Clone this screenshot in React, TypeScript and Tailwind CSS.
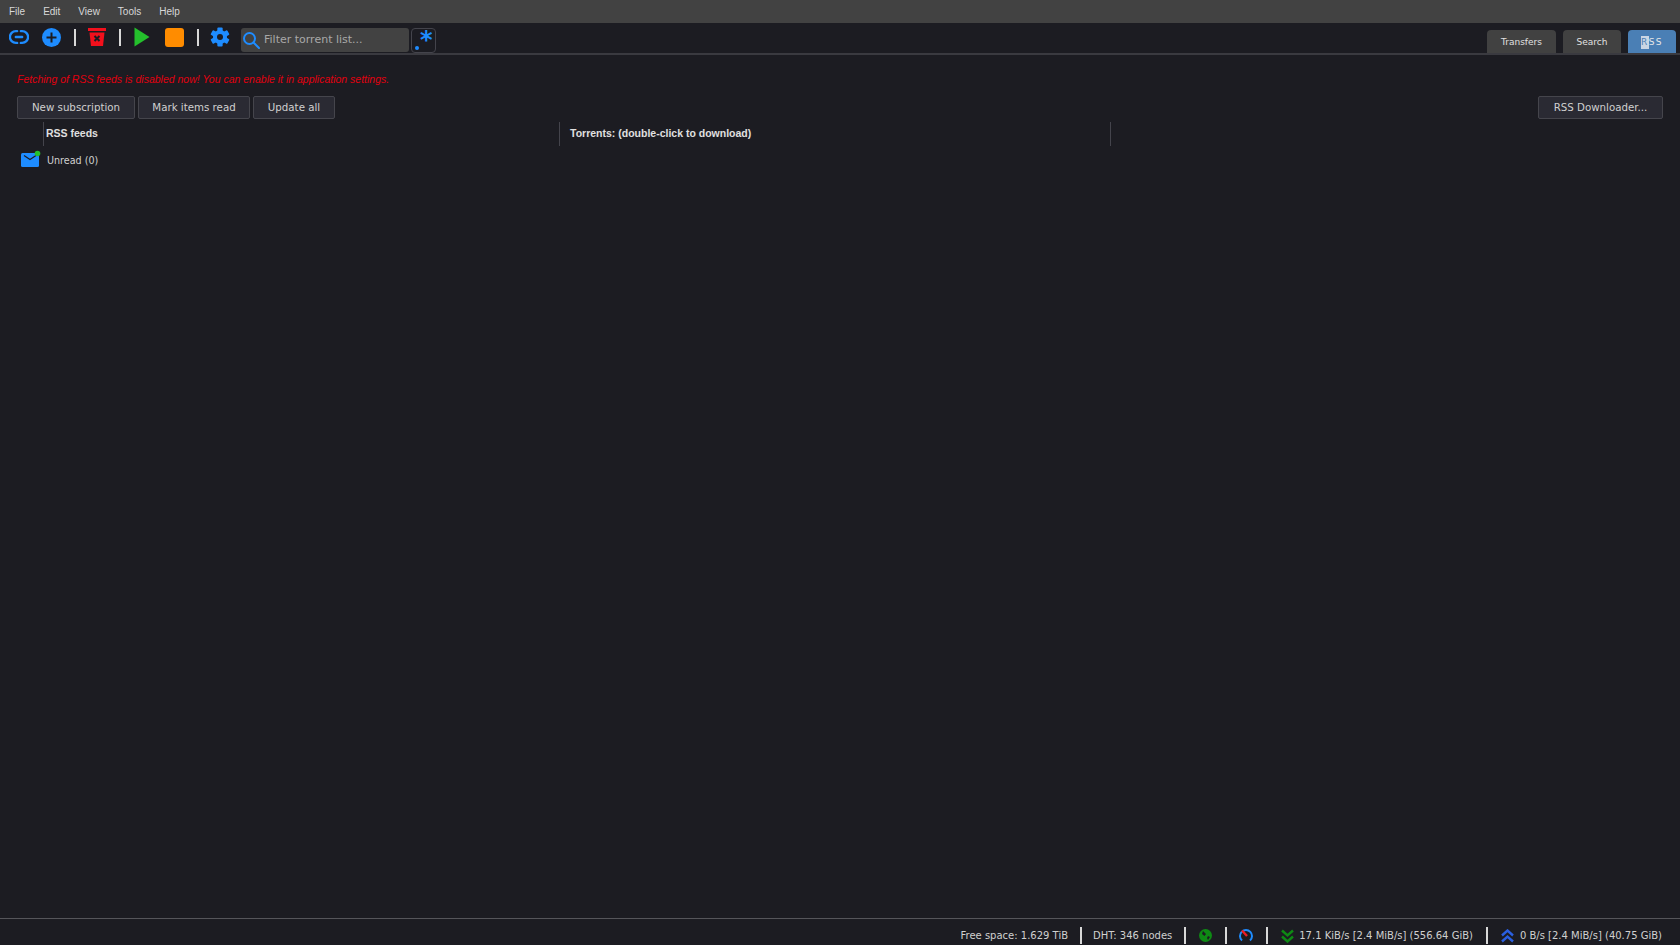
const dejavu = "font-['DejaVu_Sans',sans-serif]";

function Sep() {
  return <div className="w-[2px] h-[17px] bg-[#d8d8d8] shrink-0" />;
}

function Button({ label, width }: { label: string; width: string }) {
  return (
    <button className={`h-[23px] ${width} bg-[#2a2a33] border border-[#45454c] rounded-[2px] text-[10.25px] text-[#d0d0d0] text-center font-['DejaVu_Sans',sans-serif]`}>
      {label}
    </button>
  );
}

function Tab({ label, width, active }: { label: string; width: string; active?: boolean }) {
  return (
    <div
      className={`${width} h-[23px] pt-[2px] rounded-t-[4px] flex items-center justify-center text-[9px] font-['DejaVu_Sans',sans-serif] ${
        active ? "bg-[#4a7fb5] text-[#e8e8e8] tracking-[1.5px]" : "bg-[#414141] text-[#e0e0e0]"
      }`}
    >
      {active ? (
        <>
          <span className="bg-[#c9d6e4] text-[#4a7fb5]">R</span>SS
        </>
      ) : (
        label
      )}
    </div>
  );
}

export default function App() {
  const menu = ["File", "Edit", "View", "Tools", "Help"];

  return (
    <div className="h-screen w-full flex flex-col bg-[#1c1c22] text-[#d0d0d0] overflow-hidden font-['Liberation_Sans',sans-serif]">
      {/* menu */}
      <div className="h-[23px] shrink-0 bg-[#424242] flex items-center pl-[9px] gap-[18px] text-[10px] text-[#d8d8d8]">
        {menu.map((m) => (
          <span key={m}>{m}</span>
        ))}
      </div>

      {/* toolbar */}
      <div className="h-[32px] shrink-0 border-b-2 border-[#3a3a40] flex items-center relative">
        <div className="flex items-center pl-[9px] pb-[2px] h-full">
          <svg width="20" height="20" viewBox="-1 -1 22 22" fill="none" stroke="#1e8cff" strokeWidth="2.6" className="mr-[13px]">
            <path d="M8 3.5H6.5a6.5 6.5 0 0 0 0 13H8M12 3.5h1.5a6.5 6.5 0 0 1 0 13H12M6.5 10h7" strokeLinecap="round" />
          </svg>
          <svg width="19" height="19" viewBox="0 0 19 19" className="mr-[13px]">
            <circle cx="9.5" cy="9.5" r="9.5" fill="#1e8cff" />
            <path d="M9.5 4.5v10M4.5 9.5h10" stroke="#1c1c22" strokeWidth="2" />
          </svg>
          <Sep />
          <svg width="20" height="20" viewBox="0 0 20 20" className="ml-[12px] mr-[11px]">
            <path d="M0 1h18v3H0z" fill="#f3101c" />
            <path d="M1.5 5.5h15L15 19H3z" fill="#f3101c" />
            <path d="M6.5 9l5 5M11.5 9l-5 5" stroke="#1c1c22" strokeWidth="2" />
          </svg>
          <Sep />
          <svg width="16" height="20" viewBox="0 0 16 20" className="ml-[13px] mr-[15px]">
            <path d="M0.5 0.5L15.5 10L0.5 19.5z" fill="#24c02c" />
          </svg>
          <div className="w-[19px] h-[19px] rounded-[3px] bg-[#ff8c00] mr-[13px]" />
          <Sep />
          <svg width="20" height="20" viewBox="0 0 24 24" className="ml-[11px] mr-[11px]">
            <circle cx="12" cy="12" r="8.5" fill="#1e8cff" />
            <rect x="8.8" y="0.5" width="6.4" height="23" rx="1.2" fill="#1e8cff" />
            <rect x="8.8" y="0.5" width="6.4" height="23" rx="1.2" fill="#1e8cff" transform="rotate(60 12 12)" />
            <rect x="8.8" y="0.5" width="6.4" height="23" rx="1.2" fill="#1e8cff" transform="rotate(120 12 12)" />
            <circle cx="12" cy="12" r="3.6" fill="#1c1c22" />
          </svg>
          <div className={`w-[168px] h-[24px] mt-[6px] rounded-[3px] bg-[#424242] flex items-center text-[11px] text-[#a8a8a8] ${dejavu}`}>
            <svg width="18" height="18" viewBox="0 0 18 18" fill="none" stroke="#1e8cff" strokeWidth="2" className="mr-[4px] ml-[1px]">
              <circle cx="7.5" cy="7.5" r="5.5" />
              <path d="M11.5 11.5L17 17" strokeLinecap="round" />
            </svg>
            Filter torrent list...
          </div>
          <div className="relative w-[25px] h-[25px] mt-[6px] ml-[2px] rounded-[4px] border border-[#44444c]">
            <span className="absolute left-[8px] top-[-1px] text-[#1e8cff] text-[24px] leading-[25px] font-['DejaVu_Sans',sans-serif] font-bold">*</span>
            <span className="absolute left-[3px] bottom-[2px] w-[4px] h-[4px] rounded-full bg-[#1e8cff]" />
          </div>
        </div>
        <div className="ml-auto self-end flex items-end gap-[7px] pr-[4px]">
          <Tab label="Transfers" width="w-[69px]" />
          <Tab label="Search" width="w-[58px]" />
          <Tab label="RSS" width="w-[48px]" active />
        </div>
      </div>

      {/* rss panel */}
      <div className="flex-1 px-[17px] flex flex-col">
        <div className="mt-[16px] text-[10.5px] italic text-[#e0000f] leading-[16px] h-[16px]">
          Fetching of RSS feeds is disabled now! You can enable it in application settings.
        </div>
        <div className="mt-[9px] flex gap-[3px]">
          <Button label="New subscription" width="w-[118px]" />
          <Button label="Mark items read" width="w-[112px]" />
          <Button label="Update all" width="w-[82px]" />
          <div className="flex-1" />
          <Button label="RSS Downloader..." width="w-[125px]" />
        </div>
        <div className="mt-[3px] h-[24px] flex text-[10.5px] font-bold text-[#e0e0e0]">
          <div className="w-[26px]" />
          <div className="w-[516px] border-l border-[#44444c] pl-[2px] flex items-center">RSS feeds</div>
          <div className="w-[551px] border-l border-[#44444c] pl-[10px] flex items-center">Torrents: (double-click to download)</div>
          <div className="border-l border-[#44444c]" />
        </div>
        <div className={`mt-[4px] flex items-center pl-[4px] h-[22px] text-[9.6px] text-[#d0d0d0] ${dejavu}`}>
          <svg width="20" height="20" viewBox="0 0 20 20" className="mr-[6px] mb-[3px]">
            <rect x="0" y="3" width="18" height="14" rx="1.5" fill="#1e8cff" />
            <path d="M3 5.5l6 4L15 5.5" fill="none" stroke="#1c1c22" strokeWidth="1.2" />
            <circle cx="16.5" cy="3.5" r="2.8" fill="#24c02c" />
          </svg>
          Unread (0)
        </div>
      </div>

      {/* status bar */}
      <div className={`h-[27px] pt-[7px] shrink-0 border-t border-[#55555a] flex items-center justify-end pr-[18px] text-[10px] text-[#d0d0d0] ${dejavu}`}>
        <span>Free space: 1.629 TiB</span>
        <div className="ml-[12px] mr-[11px]"><Sep /></div>
        <span>DHT: 346 nodes</span>
        <div className="ml-[12px] mr-[13px]"><Sep /></div>
        <svg width="13" height="13" viewBox="0 0 13 13">
          <circle cx="6.5" cy="6.5" r="6.5" fill="#0e8a14" />
          <path d="M4 2l3 3-1.5 2L3 5zM9 7l2 1-2 3-1-2z" fill="#1c1c22" />
        </svg>
        <div className="ml-[13px] mr-[12px]"><Sep /></div>
        <svg width="14" height="14" viewBox="0 0 14 14" fill="none" className="-mt-[1px]">
          <path d="M3 12.5A6 6 0 1 1 11 12.5" stroke="#1e8cff" strokeWidth="2" />
          <path d="M3 2.5L8 8" stroke="#ee1c25" strokeWidth="2.4" />
        </svg>
        <div className="ml-[13px] mr-[13px]"><Sep /></div>
        <svg width="13" height="14" viewBox="0 0 13 14" fill="none" stroke="#0e8a14" strokeWidth="2.4" className="mr-[5px]">
          <path d="M1 1.5l5.5 5 5.5-5M1 7.5l5.5 5 5.5-5" />
        </svg>
        <span>17.1 KiB/s [2.4 MiB/s] (556.64 GiB)</span>
        <div className="mx-[13px]"><Sep /></div>
        <svg width="13" height="14" viewBox="0 0 13 14" fill="none" stroke="#2a5fe0" strokeWidth="2.4" className="mr-[6px]">
          <path d="M1 6.5l5.5-5 5.5 5M1 12.5l5.5-5 5.5 5" />
        </svg>
        <span>0 B/s [2.4 MiB/s] (40.75 GiB)</span>
      </div>
    </div>
  );
}
